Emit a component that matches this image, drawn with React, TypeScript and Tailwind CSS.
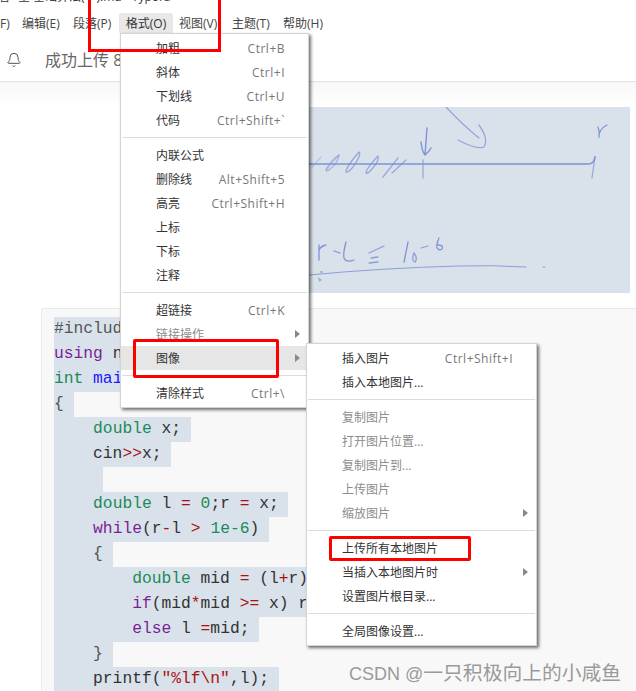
import { Bell } from "lucide-react";

const uiFont = "[font-family:'Open_Sans','Noto_Sans_CJK_SC',sans-serif]";

type MenuEntry =
  | { kind: "sep" }
  | { kind: "item"; label: string; shortcut?: string; disabled?: boolean; arrow?: boolean; active?: boolean };

const item = (label: string, shortcut?: string, extra?: { disabled?: boolean; arrow?: boolean; active?: boolean }): MenuEntry => ({
  kind: "item",
  label,
  shortcut,
  ...extra,
});
const sep: MenuEntry = { kind: "sep" };

const formatMenu: MenuEntry[] = [
  item("加粗", "Ctrl+B"),
  item("斜体", "Ctrl+I"),
  item("下划线", "Ctrl+U"),
  item("代码", "Ctrl+Shift+`"),
  sep,
  item("内联公式"),
  item("删除线", "Alt+Shift+5"),
  item("高亮", "Ctrl+Shift+H"),
  item("上标"),
  item("下标"),
  item("注释"),
  sep,
  item("超链接", "Ctrl+K"),
  item("链接操作", undefined, { disabled: true, arrow: true }),
  item("图像", undefined, { arrow: true, active: true }),
  sep,
  item("清除样式", "Ctrl+\\"),
];

const imageMenu: MenuEntry[] = [
  item("插入图片", "Ctrl+Shift+I"),
  item("插入本地图片..."),
  sep,
  item("复制图片", undefined, { disabled: true }),
  item("打开图片位置...", undefined, { disabled: true }),
  item("复制图片到...", undefined, { disabled: true }),
  item("上传图片", undefined, { disabled: true }),
  item("缩放图片", undefined, { disabled: true, arrow: true }),
  sep,
  item("上传所有本地图片"),
  item("当插入本地图片时", undefined, { arrow: true }),
  item("设置图片根目录..."),
  sep,
  item("全局图像设置..."),
];

function Menu({ entries, className }: { entries: MenuEntry[]; className: string }) {
  return (
    <div className={`absolute bg-white border border-[#d4d4d4] py-[2px] shadow-[2px_2px_3px_rgba(0,0,0,0.55)] ${className}`}>
      {entries.map((e, i) =>
        e.kind === "sep" ? (
          <div key={i} className="my-[5px] mx-[1px] h-px bg-[#dcdcdc]" />
        ) : (
          <div
            key={i}
            className={`relative flex h-6 items-center justify-between pl-[35px] pr-[23px] pt-[2px] text-[12px] ${
              e.active ? "bg-[#e6e6e6]" : ""
            } ${e.disabled ? "text-[#8c8c8c]" : "text-[#333]"}`}
          >
            <span>{e.label}</span>
            {e.shortcut && <span className="text-[#777] tracking-[0.5px]">{e.shortcut}</span>}
            {e.arrow && (
              <span className="absolute right-[8px] top-[8px] h-0 w-0 border-y-[4px] border-l-[5px] border-y-transparent border-l-[#888]" />
            )}
          </div>
        ),
      )}
    </div>
  );
}

type Tok = [string, string?];
const green = "text-[#1b8a5a]";
const purple = "text-[#7a1f95]";
const red = "text-[#a11]";
const blue = "text-[#1a1aff]";
const gray = "text-[#555]";

const codeLines: { w: number; toks: Tok[] }[] = [
  { w: 186, toks: [["#include<iostream>", gray]] },
  { w: 205, toks: [["using", purple], [" namespace std;"]] },
  { w: 117, toks: [["int", green], [" "], ["main", blue], ["()"]] },
  { w: 20, toks: [["{", gray]] },
  { w: 137, toks: [["    "], ["double", green], [" x;"]] },
  { w: 117, toks: [["    cin"], [">>", red], ["x;"]] },
  { w: 49, toks: [["    "]] },
  { w: 234, toks: [["    "], ["double", green], [" l "], ["=", red], [" "], ["0", green], [";r "], ["=", red], [" x;"]] },
  { w: 215, toks: [["    "], ["while", purple], ["(r"], ["-", red], ["l "], [">", red], [" "], ["1e-6", green], [")"]] },
  { w: 59, toks: [["    "], ["{", gray]] },
  { w: 300, toks: [["        "], ["double", green], [" mid "], ["=", red], [" (l"], ["+", red], ["r)/"], ["2", green], [";"]] },
  { w: 300, toks: [["        "], ["if", purple], ["(mid"], ["*", red], ["mid "], [">=", red], [" x) r "], ["=", red], [" mid;"]] },
  { w: 205, toks: [["        "], ["else", purple], [" l "], ["=", red], ["mid;"]] },
  { w: 59, toks: [["    "], ["}", gray]] },
  { w: 225, toks: [["    printf("], ['"%lf\\n"', red], [",l);"]] },
];

function Handwriting() {
  return (
    <svg viewBox="0 0 508 186" className="block h-full w-full" fill="none" strokeLinecap="round" strokeLinejoin="round">
      <g stroke="#7f93d4" strokeWidth="1.3">
        <path d="M150 57 H466 Q472 57 473 50" strokeWidth="1.7" />
        <path d="M473 50 L470 71" opacity="0.7" />
        <path d="M301 53 L301 71" opacity="0.7" />
        <path d="M305 21 L303 48 M299 35 Q300 44 303 48 Q307 45 309 41" strokeWidth="1.4" />
        <path d="M324 0 Q343 20 357 31 M357 18 Q367 32 362 40 Q355 43 336 33" opacity="0.75" />
        <path d="M476 20 Q478 25 477 30 M477 27 Q479 21 485 18" />
        <path d="M190 60 L199 50 M204 63 L217 48" opacity="0.35" />
        <path d="M204 63 Q208 54 217 48 Q216 56 208 62 Q205 65 204 63" opacity="0.6" />
        <path d="M224 65 Q224 60 237 45 Q240 47 231 60 Q226 66 224 65" opacity="0.75" />
        <path d="M244 66 Q244 62 256 49 Q258 53 250 62 Q246 67 244 66" opacity="0.75" />
        <path d="M261 70 L276 51 M270 66 L284 53" opacity="0.7" />
        <path d="M197 138 L197 153 M197 143 Q199 139 204 138 M212 144 L218 146" />
        <path d="M224 135 Q221 146 222 151 Q224 156 232 153" />
        <path d="M247 146 L262 139 M249 151 L256 150 M247 156 L256 155" opacity="0.85" />
        <path d="M286 135 L282 155" />
        <path d="M292 146 Q289 154 293 155 Q296 151 292 146 M299 141 L306 139" opacity="0.85" />
        <path d="M317 131 Q314 138 315 141 Q317 144 320 142 Q322 138 316 138" />
        <path d="M187 168 Q260 161 337 159 Q370 158 404 160 M421 160 H423" strokeWidth="1" opacity="0.85" />
        <path d="M199 165 H200" />
      </g>
      <path d="M196 170 L200 173 L197 175 Z" fill="#a8aeb6" />
    </svg>
  );
}

export default function App() {
  return (
    <div className={`relative h-[691px] w-[636px] overflow-hidden bg-white text-[#333] ${uiFont}`}>
      {/* title bar, cut off by the crop */}
      <div className="-mt-[6px] -ml-[2px] flex h-[19px] items-start whitespace-nowrap text-[12px] leading-[5px] text-[#333]">
        <span className="w-5">看</span>
        <span className="w-[15px]">全</span>
        <span>基础算法(一).md - Typora</span>
      </div>

      {/* menu bar */}
      <div className="flex h-5 items-start whitespace-nowrap text-[12px] leading-[22px] text-[#444]">
        <span className="w-[22px]">F)</span>
        <span className="w-[51px]">编辑(E)</span>
        <span className="w-[46px]">段落(P)</span>
        <span className="mr-[6px] h-5 w-[54px] rounded-t-[2px] bg-[#e8e8e8] text-center text-[#333]">格式(O)</span>
        <span className="w-[53px]">视图(V)</span>
        <span className="w-[51px]">主题(T)</span>
        <span>帮助(H)</span>
      </div>

      {/* notification bar */}
      <div className="flex h-[49px] items-center border-b border-[#e2e2e2] pl-[6px] pt-[6px] text-[16px] text-[#666]">
        <Bell className="h-4 w-4 text-[#555]" strokeWidth={1.5} />
        <span className="ml-[23px]">成功上传 8</span>
      </div>

      {/* image area */}
      <div className="h-[226px] bg-gradient-to-b from-[#f7f7f7] to-white to-[24px] pl-[122px] pr-[6px] pt-[25px]">
        <div className="h-[186px] bg-[#d9e2ea]">
          <Handwriting />
        </div>
      </div>

      {/* code block */}
      <div className="ml-[41px] h-[400px] rounded-tl-[3px] border-l border-t border-[#e7eaed] bg-[#f8f8f8] pl-3 pt-[8px] font-['Liberation_Mono',monospace] text-[16.3px] leading-[23px] text-[#333]">
        {codeLines.map((line, i) => (
          <div key={i} className="relative h-[25px] whitespace-pre">
            <div className="absolute left-0 top-0 h-full bg-[#d9e2ea]" style={{ width: line.w }} />
            <span className="relative">
              {line.toks.map(([t, c], j) => (
                <span key={j} className={c}>
                  {t}
                </span>
              ))}
            </span>
          </div>
        ))}
      </div>

      <Menu entries={formatMenu} className="left-[120px] top-[33px] w-[189px]" />
      <Menu entries={imageMenu} className="left-[306px] top-[343px] w-[231px]" />

      {/* red annotation boxes */}
      <div className="absolute left-[88px] top-[-10px] h-[62px] w-[133px] border-[3px] border-[#f00]" />
      <div className="absolute left-[133px] top-[339px] h-[39px] w-[146px] rounded-[2px] border-[3px] border-[#f00]" />
      <div className="absolute left-[329px] top-[536px] h-[25px] w-[142px] rounded-[2px] border-[3px] border-[#f00]" />

      {/* watermark */}
      <div className="absolute left-[349px] top-[663px] whitespace-nowrap font-['Liberation_Sans','Noto_Sans_CJK_SC',sans-serif] text-[18px] leading-[20px] text-[#9a9a9a]">
        CSDN @<span className="text-[19.8px]">一只积极向上的小咸鱼</span>
      </div>
    </div>
  );
}
